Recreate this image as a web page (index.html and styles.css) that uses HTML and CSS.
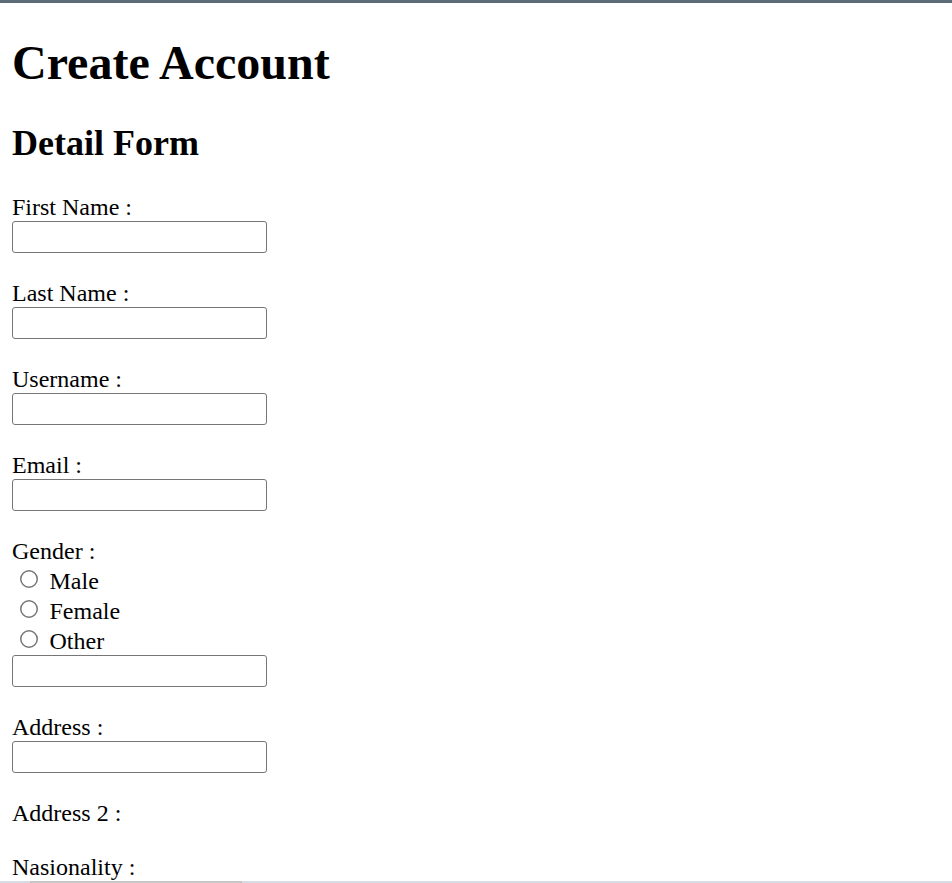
FILE: index.html
```html
<!DOCTYPE html>
<html>
<head>
<meta charset="utf-8">
<title>Create Account</title>
<link rel="stylesheet" href="styles.css">
</head>
<body>
<h1 class="title">Create Account</h1>
<h2>Detail Form</h2>
<form class="form">
First Name :<br>
<input type="text" class="field"><br><br>
Last Name :<br>
<input type="text" class="field"><br><br>
Username :<br>
<input type="text" class="field"><br><br>
Email :<br>
<input type="text" class="field"><br><br>
Gender :<br>
<input type="radio" name="gender" class="radio"> Male<br>
<input type="radio" name="gender" class="radio"> Female<br>
<input type="radio" name="gender" class="radio"> Other<br>
<input type="text" class="field"><br><br>
Address :<br>
<input type="text" class="field"><br><br>
Address 2 :<br><br>
Nasionality :<br>
<input type="text" class="field"><br><br>
</form>
<div class="scrollbar"><div class="thumb"></div></div>
</body>
</html>
```
FILE: styles.css
```css
html {
  zoom: 1.5;
  border-top: 2px solid #5b6c78;
  background: #fff;
}
body {
  font-family: "Liberation Serif", "Times New Roman", serif;
  font-size: 16px;
  color: #000;
}
.title {
  margin-top: 13.44px;
}
.field {
  font-family: "Liberation Sans", Arial, sans-serif;
  box-sizing: border-box;
  width: 170px;
  height: 21.33px;
  border: 1px solid #767676;
  border-radius: 2px;
}
.scrollbar {
  position: fixed;
  left: 0;
  right: 0;
  bottom: 0;
  height: 1.5px;
  background: #d6dde6;
}
.thumb {
  margin-left: 20px;
  width: 141px;
  height: 100%;
  background: #c6c6c6;
}
```
